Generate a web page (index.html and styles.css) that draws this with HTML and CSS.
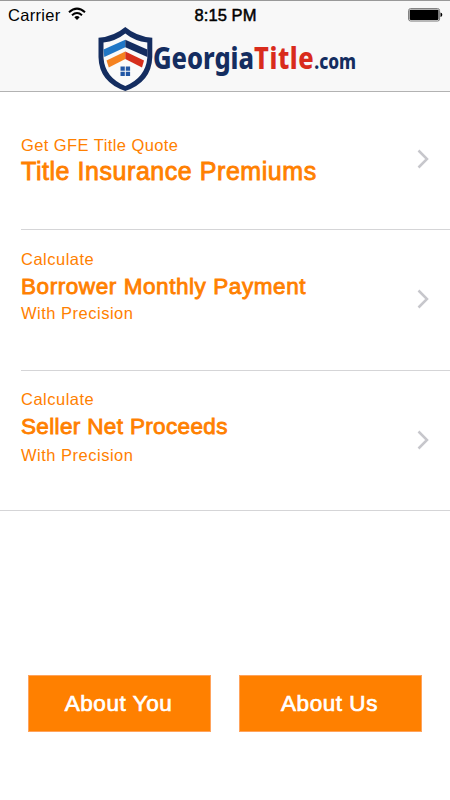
FILE: index.html
```html
<!DOCTYPE html>
<html lang="en">
<head>
<meta charset="utf-8">
<title>GeorgiaTitle.com</title>
<link rel="stylesheet" href="styles.css">
</head>
<body>
<header class="header">
  <div class="status">
    <div class="carrier"><span class="carrier-name">Carrier</span>
      <svg class="wifi" width="18" height="14" viewBox="0 0 18 14" fill="none" stroke="#000" stroke-width="2"><path d="M1 5.2Q9 -2 17 5.2"/><path d="M4 8.2Q9 3.8 14 8.2"/><path d="M6.3 10.2Q9 7.7 11.7 10.2L9 13Z" fill="#000" stroke="none"/></svg>
    </div>
    <span class="time">8:15 PM</span>
    <svg class="battery" width="35" height="14" viewBox="0 0 35 14"><rect x=".6" y=".6" width="31" height="12.4" rx="2" fill="none" stroke="#777" stroke-width="1"/><rect x="1.7" y="1.7" width="28.8" height="10.2" rx=".8"/><path d="M32.5 4.5Q34.3 4.7 34.3 6.8T32.5 9Z"/></svg>
  </div>
  <div class="logo">
    <svg width="56" height="66" viewBox="97 26 56 66">
      <path d="M125.300 27Q114 36.500 98.500 37.800V57Q99 82 125.300 91Q151.500 82 152.300 57V37.800Q136.500 36.500 125.300 27Z" fill="#142d60"/>
      <path d="M125.300 33.500Q116 41 103.500 42.500V58Q105 77.500 125.300 86Q145.500 77.500 147.300 58V42.500Q134.500 41 125.300 33.500Z" fill="#fafafa"/>
      <path d="M103.500 49.500L125.300 39.800V47.300L104.300 57Z" fill="#2077c6"/>
      <path d="M125.300 39.800L147.300 49.500V57L125.300 47.300Z" fill="#142d60"/>
      <path d="M106.500 60.500L125.300 51.500V59L108.800 67.500Z" fill="#f58220"/>
      <path d="M125.300 51.500L144 60.500L142 67.500L125.300 59Z" fill="#d62f1c"/>
      <path d="M120.500 66.500h4.300v4.300h-4.300zM125.800 66.500h4.300v4.300h-4.300zM120.500 71.700h4.300v4.300h-4.300zM125.800 71.700h4.300v4.300h-4.300z" fill="#2257a5"/>
    </svg>
    <div class="wordmark"><span>Georgia</span><span class="red">Title</span><span class="small">.com</span></div>
  </div>
</header>
<main class="list">
  <a class="row row-quote">
    <div><p class="label quote">Get GFE Title Quote</p><h2 class="title large">Title Insurance Premiums</h2></div>
    <svg class="chevron" width="12" height="20" viewBox="0 0 12 20"><path d="M1.500 1.500L10 10L1.500 18.500"/></svg>
  </a>
  <a class="row row-payment">
    <div><p class="label">Calculate</p><h2 class="title">Borrower Monthly Payment</h2><p class="label precision">With Precision</p></div>
    <svg class="chevron" width="12" height="20" viewBox="0 0 12 20"><path d="M1.500 1.500L10 10L1.500 18.500"/></svg>
  </a>
  <a class="row row-proceeds">
    <div><p class="label">Calculate</p><h2 class="title seller">Seller Net Proceeds</h2><p class="label precision">With Precision</p></div>
    <svg class="chevron" width="12" height="20" viewBox="0 0 12 20"><path d="M1.500 1.500L10 10L1.500 18.500"/></svg>
  </a>
</main>
<nav class="actions">
  <button class="button">About You</button>
  <button class="button">About Us</button>
</nav>
</body>
</html>
```

FILE: styles.css
```css
* { box-sizing: border-box; }
body { margin: 0; width: 450px; height: 800px; background: #fff; font-family: "Liberation Sans", Arial, sans-serif; overflow: hidden; }
.header { height: 92px; background: #f8f8f8; border-top: 1px solid #999; border-bottom: 1px solid #b2b2b2; }
.status { display: grid; grid-template-columns: 1fr auto 1fr; align-items: center; height: 25px; padding: 3px 7px 0 8px; font-size: 16.5px; line-height: 20px; }
.carrier { display: flex; align-items: center; gap: 7px; }
.carrier-name { letter-spacing: .3px; }
.wifi { margin-top: -2px; }
.time { -webkit-text-stroke: .5px #000; letter-spacing: .1px; }
.battery { justify-self: end; }
.logo { display: flex; margin-left: 97px; height: 66px; }
.logo svg { flex: none; }
.wordmark { height: 44px; margin: 9px 0 0; line-height: 44px; white-space: nowrap; font-family: "Noto Sans", sans-serif; font-weight: 800; font-size: 31px; color: #142d60; transform: scaleX(.82); transform-origin: 0 0; }
.wordmark .red { color: #d92b1c; letter-spacing: .7px; }
.wordmark .small { font-size: 21px; }
.row { display: flex; align-items: flex-start; justify-content: space-between; margin-left: 21px; padding-right: 21px; border-bottom: 1px solid #d5d5d7; color: #ff8000; }
.row-quote { height: 138px; padding-top: 43px; }
.row-payment { height: 141px; padding-top: 19px; }
.row-proceeds { height: 140px; margin-left: 0; padding-left: 21px; padding-top: 18px; }
.label, .title { margin: 0; white-space: nowrap; }
.label { font-size: 16.5px; line-height: 20px; letter-spacing: .5px; }
.label.quote { letter-spacing: .42px; }
.title { font-size: 22.5px; line-height: 28px; font-weight: 400; letter-spacing: .57px; -webkit-text-stroke: .85px #ff8000; margin: 4px 0 2px; }
.title.large { font-size: 25px; letter-spacing: .55px; margin: 2px 0 0; }
.title.seller { letter-spacing: .35px; margin-bottom: 4px; }
.chevron { fill: none; stroke: #c7c7cc; stroke-width: 2.500; margin-top: 14px; }
.row-payment .chevron { margin-top: 40px; }
.row-proceeds .chevron { margin-top: 41px; }
.actions { display: flex; gap: 28px; padding: 164px 28px 0; }
.button { width: 183px; height: 57px; padding: 0 2px 0 0; border: 1px solid #ffa35c; background: #ff8000; color: #fff; font: 22.5px "Liberation Sans", Arial, sans-serif; letter-spacing: .55px; -webkit-text-stroke: .7px #fff; }
```
